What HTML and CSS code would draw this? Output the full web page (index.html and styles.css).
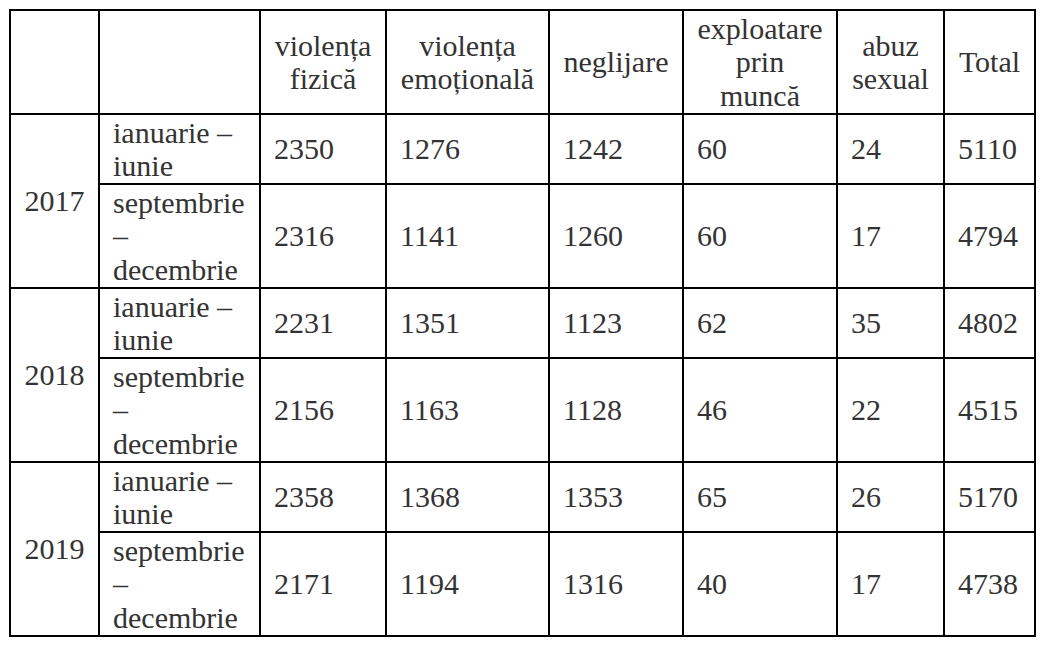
FILE: index.html
```html
<!DOCTYPE html>
<html>
<head>
<meta charset="utf-8">
<link rel="stylesheet" href="styles.css">
</head>
<body>
<table class="stats">
  <colgroup>
    <col class="c1"><col class="c2"><col class="c3"><col class="c4">
    <col class="c5"><col class="c6"><col class="c7"><col class="c8">
  </colgroup>
  <tr class="tall">
    <td class="head"></td>
    <td class="head"></td>
    <td class="head">violența fizică</td>
    <td class="head">violența emoțională</td>
    <td class="head">neglijare</td>
    <td class="head">exploatare prin muncă</td>
    <td class="head">abuz sexual</td>
    <td class="head">Total</td>
  </tr>
  <tr class="short">
    <td class="year" rowspan="2">2017</td>
    <td>ianuarie – iunie</td>
    <td>2350</td><td>1276</td><td>1242</td><td>60</td><td>24</td><td>5110</td>
  </tr>
  <tr class="tall">
    <td>septembrie – decembrie</td>
    <td>2316</td><td>1141</td><td>1260</td><td>60</td><td>17</td><td>4794</td>
  </tr>
  <tr class="short">
    <td class="year" rowspan="2">2018</td>
    <td>ianuarie – iunie</td>
    <td>2231</td><td>1351</td><td>1123</td><td>62</td><td>35</td><td>4802</td>
  </tr>
  <tr class="tall">
    <td>septembrie – decembrie</td>
    <td>2156</td><td>1163</td><td>1128</td><td>46</td><td>22</td><td>4515</td>
  </tr>
  <tr class="short">
    <td class="year" rowspan="2">2019</td>
    <td>ianuarie – iunie</td>
    <td>2358</td><td>1368</td><td>1353</td><td>65</td><td>26</td><td>5170</td>
  </tr>
  <tr class="tall">
    <td>septembrie – decembrie</td>
    <td>2171</td><td>1194</td><td>1316</td><td>40</td><td>17</td><td>4738</td>
  </tr>
</table>
</body>
</html>
```
FILE: styles.css
```css
html {
  background: #fff;
}

body {
  margin: 0;
  padding: 9px 0 0 9px;
  font-family: "Liberation Serif", "Tinos", "Times New Roman", serif;
  font-size: 30px;
  color: #333;
}

.stats {
  border-collapse: separate;
  border-spacing: 0;
  table-layout: fixed;
  width: 1027px;
  border-left: 2px solid #000;
  border-top: 2px solid #000;
}

.c1 { width: 89px; }
.c2 { width: 161px; }
.c3 { width: 126px; }
.c4 { width: 163px; }
.c5 { width: 134px; }
.c6 { width: 154px; }
.c7 { width: 107px; }
.c8 { width: 91px; }

.stats td {
  border-right: 2px solid #000;
  border-bottom: 2px solid #000;
  padding: 0 10px 0 13px;
  line-height: 33.4px;
  vertical-align: middle;
  text-align: left;
}

.stats td.head {
  text-align: center;
  padding: 0 10px;
}

.stats td.year {
  text-align: center;
  padding: 0;
}

.short { height: 70px; }
.tall { height: 104px; }
```
